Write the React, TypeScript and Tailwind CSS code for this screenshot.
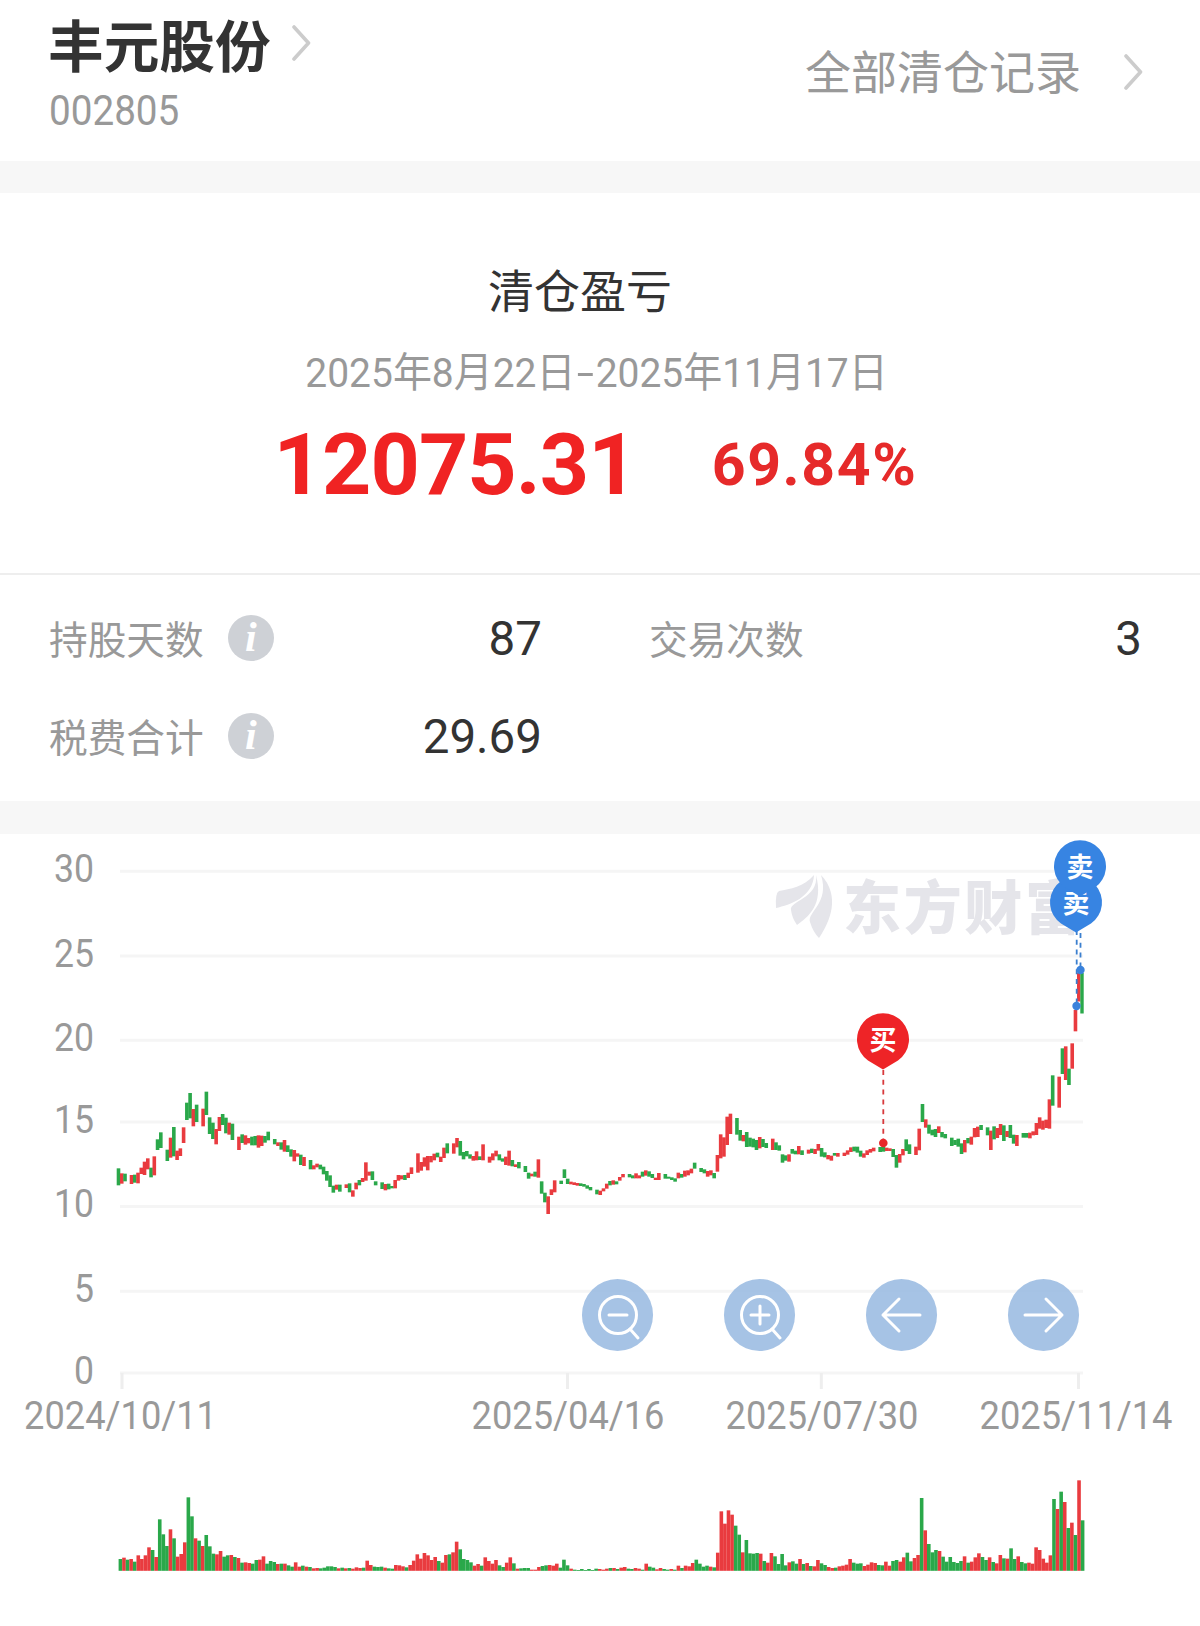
import type { ReactNode } from 'react'

const RED = '#e93b3f'
const GREEN = '#2aa84a'

// each entry is colour + top-bottom, "." is a day without a bar
const priceSegments = [
  {
    slot: 0,
    dy: 180,
    bars: `g325-376 r340-371 g341-364 . r345-372 g344-368 r338-370 r323-342 r305-345 r295-328
      g323-352 r289-346 g238-270 g217-264 . g269-303 r233-293 g201-289 r272-300 r265-288
      r202-249 g128-180 g99-175 r147-199 g134-186 . r146-199 g95-165 g172-222 g188-237
      r207-253 r171-213 g162-195 g173-220 r188-224 g191-240 . r230-270 g223-249 r226-254
      r234-250 g230-256 g228-256 r226-263 r227-258 g228-248 g215-241 . g237-253 r247-258
      g247-269 r240-275 g256-276 g268-290 r270-304 r280-290 g284-315 r291-318 . g300-328
      r316-328 r311-322 g314-328 g320-343 g333-362 g346-381 g377-398 r374-389 g374-395 .
      r373-384 g370-397 r391-410 r368-388 g360-376 r354-366 r307-362 r335-347 g334-360 g364-376
      . g367-387 r372-391 g371-388 g378-385 r360-385 r345-362 r346-358 g345-360 r338-354
      r322-342 . r280-338`,
  },
  {
    slot: 93,
    dy: 300,
    bars: `r186-212 r172-200 r168-211 r168-187 r161-181 g158-172 r170-186
      r143-174 g130-160 . r130-161 r114-142 g123-167 g156-178 g153-169 g163-176 r168-182
      r154-181 g169-180 r133-181 . r170-188 r160-181 r152-169 g163-181 g175-185 r170-195
      r152-197 g180-199 r193-201 g186-205 . g198-216 g218-236 r221-229 g215-230 r178-233
      g244-281 g278-307 r289-342 r268-285 r241-277 . g242-252 g208-234 g236-252 r245-253
      r247-255 r249-257 g250-258 g252-260 g256-266 g261-271 . g269-283 r272-285 r265-274
      r251-266 g243-256 r241-254 g244-253 r231-242 r222-232 . g222-232 g226-235 r220-235
      r226-235 g215-230 r211-227 g214-230 g222-234 r233-240 r219-240 . g222-236 g230-236
      g232-240 g235-245 r218-235 g222-233 r212-230 r211-226 r206-220 g188-206 . g204-216
      g208-220 r213-230 r211-226 g219-235 r165-215 r103-175 r112-170 r50-135 r41-102`,
  },
  {
    slot: 190,
    dy: 0,
    bars: `g354-404 g390-422 r405-424 g396-441 g413-440 g416-442 g420-450 r411-445 g417-441 g429-444
      . r416-450 g427-450 g436-452 g463-488 g466-482 r463-485 g447-461 g452-463 r438-463
      g451-465 . r449-461 g446-459 r447-462 r432-452 g444-470 g457-472 r465-478 r467-482
      g459-467 r459-470 . r458-468 r451-464 r442-456 g440-454 g440-458 g452-470 r460-473
      r451-465 r447-458 r443-454 . g441-456 g441-455 r443-453 r445-453 g447-471 g465-503
      r462-488 r447-466 g418-453 g433-462 . r440-465 r386-451 g312-366 r358-383 g374-401
      g389-406 g387-411 r379-399 g396-412 g402-415 . g413-438 g420-435 g416-440 g430-462
      r420-457 g414-430 r410-434 r384-412 r380-411 g375-390 . g382-406 r392-450 g379-418
      r384-414 r372-405 g376-423 r393-411 g375-414 g404-431 r405-438 . g399-413 g399-413
      r398-415 r394-406 r369-405 r352-386 r362-389 r359-384 r298-386 g226-317 . r230-323
      g145-222 r139-240 g206-255 r130-206 r30-94`,
  },
]

const volume = `g267 r263 g269 r267 g275 r256 r267 r256 r232 g240 r261 g148 g193 g228 r178 g205 r260 r252 r217 g82
  g139 r205 g212 r228 g195 g229 g251 r253 r243 g260 g256 r255 g261 r264 g278 r277 r279 g281 g270 r269
  r259 g281 g273 g276 r282 g281 r281 g286 g290 r277 r290 g287 r290 g291 r295 r294 g295 g293 g289 g289
  g291 r295 g293 r295 g294 r296 r292 r294 g293 r272 r285 g290 g291 g290 r293 g295 g296 r285 r286 r289
  g292 r285 r272 r253 r266 r249 r256 r270 r261 g273 r278 r255 g253 r247 r215 g238 g267 g270 g277 r287
  r282 g287 r262 r273 r281 r270 g286 g291 r278 r262 g280 r296 g295 g294 g294 r299 r299 r291 g288 g286
  r285 r287 r281 g293 g269 g286 r296 g299 g300 g297 g300 g297 g300 g296 r297 r299 r296 g294 r294 g297
  r293 r291 g296 g297 r294 r296 g299 r281 g290 g293 r298 r294 g297 g299 r297 g299 r287 g294 r287 r289
  r279 g269 g281 g290 g287 r290 g292 r248 r124 r161 r121 r134 g167 g194 r247 g210 g250 g251 g249 r251
  g273 r278 r249 g259 g282 g252 g286 r277 g274 g281 r267 g282 r279 g288 r289 r270 g280 g285 r291 r294
  g293 r289 r287 r284 r267 g278 g281 g280 r288 r284 r277 r279 g285 g286 r275 r287 g273 g270 r275 r262
  g248 g274 r264 r255 g84 r181 g222 g247 g240 r243 g260 g275 g261 g276 g279 g273 r259 g278 r275 r262
  r250 g261 g270 r262 g276 r280 r255 g265 r266 g235 g267 r259 g276 g280 r278 r281 r232 r240 r266 r278
  r256 g87 r117 g65 r96 g174 r158 g195 r31 g151`

const priceBars = priceSegments.flatMap(({ slot, dy, bars }) =>
  bars
    .trim()
    .split(/\s+/)
    .map((b, i) => {
      if (b === '.') return null
      const [top, bottom] = b.slice(1).split('-').map(Number)
      return {
        x: 118.5 + (slot + i) * 3.255,
        y: 1000 + (top + dy) / 3,
        h: (bottom - top) / 3,
        color: b[0] === 'r' ? RED : GREEN,
      }
    })
)

const volumeBars = volume.split(/\s+/).map((b, i) => ({
  x: 118.6 + i * 3.577,
  y: 1470 + Number(b.slice(1)) / 3,
  color: b[0] === 'r' ? RED : GREEN,
}))

const yAxis = [
  { label: '30', y: 871.3 },
  { label: '25', y: 956 },
  { label: '20', y: 1040.3 },
  { label: '15', y: 1122 },
  { label: '10', y: 1206.5 },
  { label: '5', y: 1291.3 },
  { label: '0', y: 1373 },
]

const xAxis = [
  { label: '2024/10/11', x: 24, tick: 122 },
  { label: '2025/04/16', x: 471.5, tick: 567.5 },
  { label: '2025/07/30', x: 725.5, tick: 821.3 },
  { label: '2025/11/14', x: 979.5, tick: 1078.5 },
]

function Chevron() {
  return (
    <svg width="22" height="40" viewBox="0 0 22 40" fill="none" stroke="#cccccc" strokeWidth="3.6" strokeLinecap="round">
      <path d="M2 4 L16.5 20 L2 36" strokeLinejoin="round" />
    </svg>
  )
}

function InfoIcon() {
  return (
    <span className="ml-6 flex h-[46px] w-[46px] items-center justify-center rounded-full bg-[#ced1d6] font-['Liberation_Serif',serif] text-[42px] font-bold italic leading-none text-white">
      <span className="-translate-y-px">i</span>
    </span>
  )
}

function Stat({ label, value, info }: { label: string; value: string; info?: boolean }) {
  return (
    <div className="flex h-[98px] items-center">
      <span className="-mt-px text-[38.7px] leading-none text-[#999999]">{label}</span>
      {info && <InfoIcon />}
      <span className="ml-auto mt-1 font-[Roboto,sans-serif] text-[47.5px] leading-none text-[#333333]">{value}</span>
    </div>
  )
}

function Pin({ x, y, text, color }: { x: number; y: number; text: string; color: string }) {
  return (
    <g>
      <path
        d={`M${x} ${y + 30} L${x - 15} ${y + 21} A26 26 0 1 1 ${x + 15} ${y + 21} Z`}
        fill={color}
      />
      <text x={x} y={y + 10} textAnchor="middle" fontSize="27" fontWeight="700" fill="#ffffff">
        {text}
      </text>
    </g>
  )
}

function RoundButton({ label, children }: { label: string; children: ReactNode }) {
  return (
    <button aria-label={label} className="h-[72px] w-[71px] rounded-full bg-[#9cbce2]/90">
      <svg width="71" height="72" viewBox="0 0 71 72" fill="none" stroke="#ffffff" strokeWidth="3" strokeLinecap="round" strokeLinejoin="round">
        {children}
      </svg>
    </button>
  )
}

function Chart() {
  return (
    <svg className="block" width="1200" height="792" viewBox="0 834 1200 792">
      {yAxis.map((t) => (
        <g key={t.label}>
          <rect x="120" y={t.y - 1.5} width="963" height="3" fill="#f5f5f5" />
          <text
            x="94"
            y={t.y + 10.5}
            textAnchor="end"
            fontSize="39"
            fill="#999999"
            className="font-[Roboto,sans-serif]"
            textLength={t.label.length * 20}
            lengthAdjust="spacingAndGlyphs"
          >
            {t.label}
          </text>
        </g>
      ))}
      {xAxis.map((t) => (
        <g key={t.label}>
          <rect x={t.tick - 1.5} y="1373" width="3" height="16" fill="#eeeeee" />
          <text
            x={t.x}
            y="1428.5"
            fontSize="39"
            fill="#999999"
            className="font-[Roboto,sans-serif]"
            textLength="193"
            lengthAdjust="spacingAndGlyphs"
          >
            {t.label}
          </text>
        </g>
      ))}

      <clipPath id="mark">
        <rect x="770" y="860" width="304" height="90" />
      </clipPath>
      <g fill="#e5e5ea" clipPath="url(#mark)">
        <path d="M814 875 C804 887 790 889 779 891 Q775 893 776 908 C790 905 813 897 814 875 Z" />
        <path d="M816 875 C819 898 789 901 791 910 Q792 918 797 925 C808 917 824 905 816 875 Z" />
        <path d="M821 875 C830 903 807 912 810 922 Q813 932 819 938 C830 922 841 896 821 875 Z" />
        <text x="843" y="929" fontSize="58" fontWeight="900" textLength="240">
          东方财富
        </text>
      </g>

      {priceBars.map((b, i) => b && <rect key={i} x={b.x - 1.8} y={b.y} width="3.6" height={b.h} fill={b.color} />)}
      <rect x="1077" y="973" width="3.4" height="28.5" fill={RED} />
      <rect x="1080.3" y="973" width="3.4" height="40.5" fill={GREEN} />

      {volumeBars.map((b, i) => (
        <rect key={i} x={b.x} y={b.y} width="3.6" height={1570.8 - b.y} fill={b.color} />
      ))}

      <g strokeWidth="1.8" strokeDasharray="5 4.8">
        <path d="M883.3 1070 V1139" stroke="#d8393c" />
        <path d="M1080.5 933 V966" stroke="#3b7fcf" />
        <path d="M1076.7 930 V1003" stroke="#3b7fcf" />
      </g>
      <circle cx="883.3" cy="1143" r="4.3" fill="#e8262a" />
      <circle cx="1080.5" cy="970" r="4.2" fill="#3a82dc" />
      <circle cx="1076.5" cy="1006" r="4.2" fill="#3a82dc" />
      <Pin x={883} y={1039.5} text="买" color="#ee2427" />
      <Pin x={1076} y={902.5} text="卖" color="#3784e2" />
      <Pin x={1080} y={866.5} text="卖" color="#3784e2" />
    </svg>
  )
}

export default function App() {
  return (
    <div className="min-h-[1626px] w-[1200px] overflow-hidden bg-white font-['Noto_Sans_CJK_SC',sans-serif]">
      <header className="flex h-[161px] justify-between pl-12 pr-[54px]">
        <div>
          <div className="flex h-[86px] items-center gap-[21px]">
            <h1 className="text-[55.7px] font-bold leading-none text-[#333333]">丰元股份</h1>
            <Chevron />
          </div>
          <div className="ml-px mt-1 origin-left scale-x-92 font-[Roboto,sans-serif] text-[42px] leading-[42px] text-[#999999]">
            002805
          </div>
        </div>
        <div className="flex h-[143px] items-center gap-[43px] text-[46px] leading-none text-[#999999]">
          <span className="-mt-[6px]">全部清仓记录</span>
          <Chevron />
        </div>
      </header>
      <div className="h-8 bg-[#f7f7f7]" />

      <section className="flex h-[380px] flex-col items-center pt-[72px]">
        <h2 className="mr-10 text-[46px] leading-[46px] text-[#333333]">清仓盈亏</h2>
        <p className="-ml-[7px] mt-[39px] scale-x-95 whitespace-nowrap font-[Roboto,'Noto_Sans_CJK_SC',sans-serif] text-[41px] leading-[46px] text-[#999999]">
          2025年8月22日<span className="inline-block scale-x-160 px-[5px]">-</span>2025年11月17日
        </p>
        <div className="-ml-[9px] mt-[26px] flex items-center gap-[75px] font-[Roboto,sans-serif] font-bold leading-[86px] text-[#f02323]">
          <span className="text-[86px] tracking-[-0.9px]">12075.31</span>
          <span className="text-[59px] tracking-[1.6px] text-[#e62a2a]">69.84%</span>
        </div>
      </section>

      <section className="grid h-[228px] grid-cols-2 gap-x-[107px] border-t-2 border-[#eeeeee] pb-[18px] pl-[49px] pr-[58px] pt-[14px]">
        <Stat label="持股天数" value="87" info />
        <Stat label="交易次数" value="3" />
        <Stat label="税费合计" value="29.69" info />
      </section>
      <div className="h-[33px] bg-[#f7f7f7]" />

      <section className="relative">
        <Chart />
        <div className="absolute left-[582px] top-[445px] flex gap-[71px]">
          <RoundButton label="缩小">
            <circle cx="36" cy="36" r="18.5" />
            <path d="M27 36 H45 M48 50 L56 59" />
          </RoundButton>
          <RoundButton label="放大">
            <circle cx="36" cy="36" r="18.5" />
            <path d="M27 36 H45 M36 27 V45 M48 50 L56 59" />
          </RoundButton>
          <RoundButton label="左移">
            <path d="M54 36 H17 M33 20 L17 36 L33 52" />
          </RoundButton>
          <RoundButton label="右移">
            <path d="M17 36 H54 M38 20 L54 36 L38 52" />
          </RoundButton>
        </div>
      </section>
    </div>
  )
}
